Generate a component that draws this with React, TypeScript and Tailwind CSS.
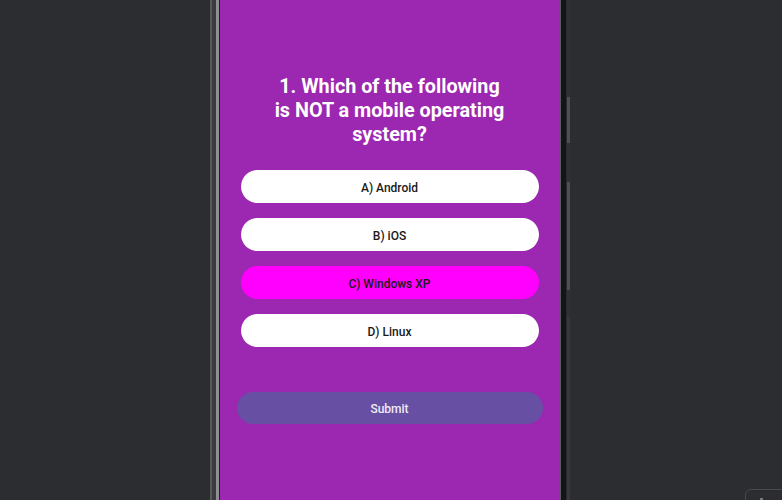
const options = [
  { label: "A) Android", selected: false },
  { label: "B) iOS", selected: false },
  { label: "C) Windows XP", selected: true },
  { label: "D) Linux", selected: false },
]

export default function App() {
  return (
    <div className="relative w-[782px] h-[500px] overflow-hidden bg-[#2b2d31] flex font-['Roboto',sans-serif]">
      <div className="ml-[210px] flex h-full">
        {/* left bezel */}
        <div className="w-[2px] h-full bg-[#5a5a5c]" />
        <div className="w-[4px] h-full bg-[#3a3b3d]" />
        <div className="w-[3px] h-full bg-[#909092]" />
        <div className="w-[1px] h-full bg-[#1e1e20]" />

        {/* screen */}
        <div className="w-[339px] h-full bg-[#9c27b0] flex flex-col items-center">
          <h1 className="pt-[75px] w-[236px] text-center text-white font-bold text-[19.8px] leading-[24px]">
            1. Which of the following is NOT a mobile operating system?
          </h1>
          <div className="mt-[23px] flex flex-col gap-[15px]">
            {options.map((o) => (
              <button
                key={o.label}
                className={
                  o.selected
                    ? "w-[298px] h-[33px] pt-[2px] rounded-full bg-[#ff00ff] text-[#1a1a1a] text-[12px] font-medium"
                    : "w-[298px] h-[33px] pt-[2px] rounded-full bg-white text-[#1a1a1a] text-[12px] font-medium"
                }
              >
                {o.label}
              </button>
            ))}
          </div>
          <button className="mt-[45px] w-[306px] h-[32px] pt-[1px] rounded-full bg-[#6750a3] text-[#f0eaf6] text-[12px] font-medium">
            Submit
          </button>
        </div>

        {/* right bezel */}
        <div className="w-[2px] h-full bg-[#5a5a5c]" />
        <div className="w-[5px] h-full bg-[#141416]" />
        <div className="w-[1px] h-full bg-[#2b2b2d]" />
        <div className="w-[3px] h-full bg-[#2f3034] flex flex-col">
          <div className="mt-[97px] h-[46px] bg-[#4e4f52]" />
          <div className="mt-[39px] h-[108px] bg-[#4e4f52]" />
          <div className="mt-[27px] h-[183px] bg-[#37383b]" />
        </div>
      </div>

      {/* corner widget */}
      <div className="absolute left-[745px] top-[489px] w-[50px] h-[30px] rounded-[6px] border border-[#48494d]" />
      <div className="absolute left-[760px] top-[498px] w-[3px] h-[2px] bg-[#77787c]" />
    </div>
  )
}
